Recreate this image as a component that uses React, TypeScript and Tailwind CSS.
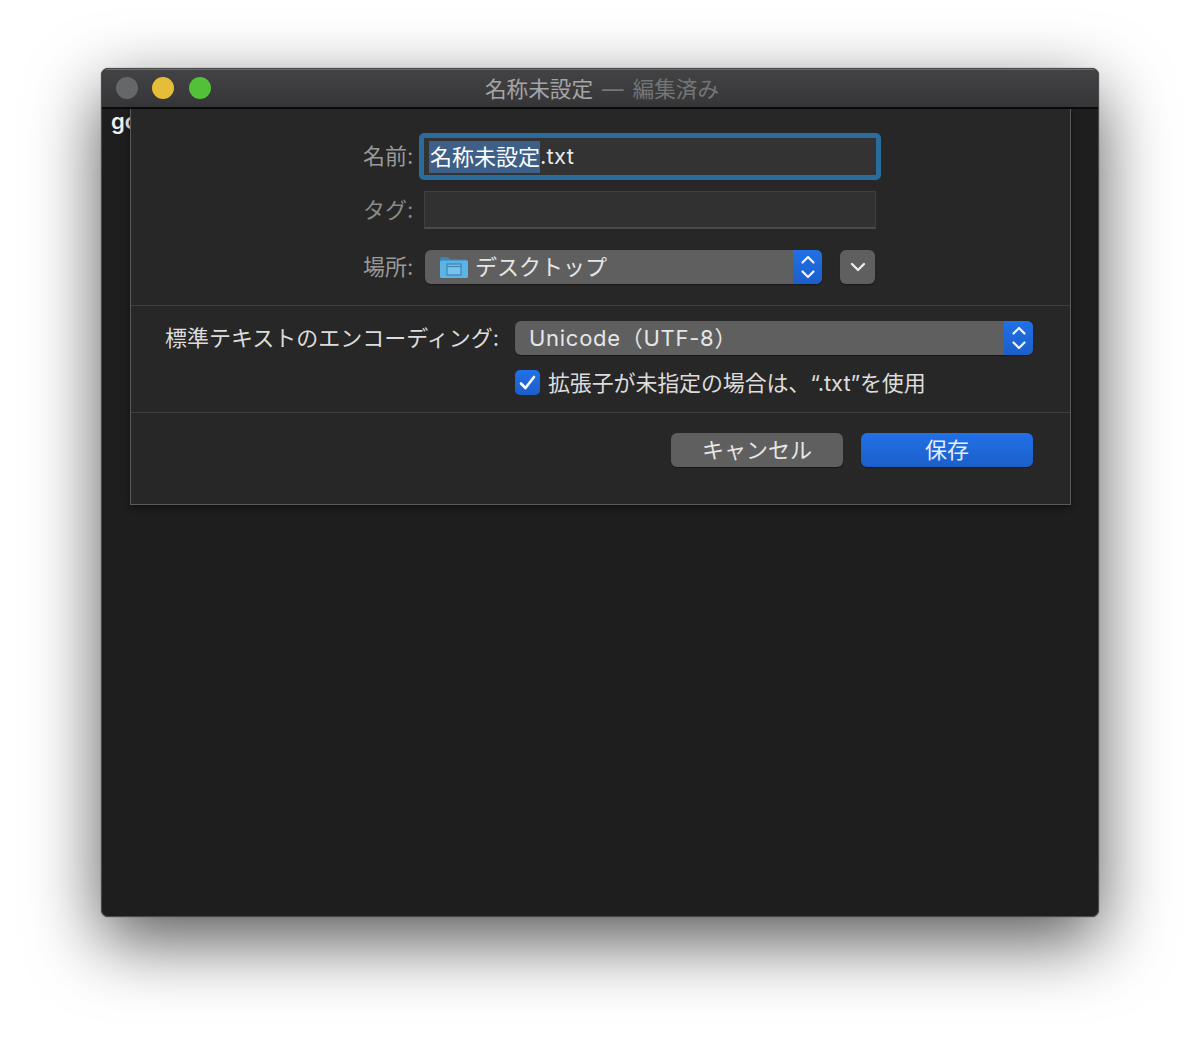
const font = "font-['Inter','Noto_Sans_CJK_JP',sans-serif]";

function Stepper() {
  return (
    <div className="w-[29px] self-stretch rounded-r-[6px] bg-gradient-to-b from-[#2170e8] to-[#1b5fc9] flex items-center justify-center">
      <svg width="16" height="26" viewBox="0 0 16 26" fill="none" stroke="#f0f4fb" strokeWidth="2.2" strokeLinecap="round" strokeLinejoin="round">
        <path d="M2.5 8.5 8 3l5.500 5.500" />
        <path d="M2.500 17.500 8 23l5.500-5.500" />
      </svg>
    </div>
  );
}

function FolderIcon() {
  return (
    <svg width="28" height="22" viewBox="0 0 28 22" className="shrink-0">
      <path d="M0 3a2 2 0 0 1 2-2h6l2.500 2.500H26a2 2 0 0 1 2 2V6H0z" fill="#3d87b4" />
      <rect x="0" y="4.500" width="28" height="17.500" rx="1.500" fill="#5cb3e6" />
      <rect x="7" y="8" width="14" height="11" fill="#7ac2ee" stroke="#3f88b8" strokeWidth="1.300" />
      <path d="M7 10.500h14" stroke="#3f88b8" strokeWidth="1.300" />
    </svg>
  );
}

export default function App() {
  return (
    <div className={`h-[1051px] w-[1200px] overflow-hidden bg-white pl-[101px] pt-[68px] ${font}`}>
      <div className="relative flex h-[849px] w-[998px] flex-col overflow-hidden rounded-[7px] border border-[#4a4a4a] bg-[#1e1e1e] shadow-[0_24px_70px_rgba(0,0,0,0.66),0_0_1px_rgba(0,0,0,0.8)]">
        <div className="relative flex h-[40px] shrink-0 items-center border-b-2 border-[#0b0b0b] bg-gradient-to-b from-[#434345] to-[#363638] pl-[14px] shadow-[inset_0_1px_0_#6b6b6d]">
          <div className="flex gap-[14.300px]">
            <span className="h-[22px] w-[22px] rounded-full bg-[#666769]" />
            <span className="h-[22px] w-[22px] rounded-full bg-[#e6bd39]" />
            <span className="h-[22px] w-[22px] rounded-full bg-[#52c137]" />
          </div>
          <div className="absolute inset-x-0 top-0 flex h-[40px] items-center justify-center pl-[4px] text-[21.6px] text-[#a5a5a6]">
            名称未設定<span className="px-[9px] text-[#747576]">—</span><span className="text-[#747576]">編集済み</span>
          </div>
        </div>
        <div className="relative flex-1">
          <div className="pl-[9px] text-[22px] font-semibold leading-[24px] text-[#f0f0f0]">go</div>
          <div className="absolute left-[28px] top-0 flex h-[396px] w-[941px] flex-col border-x border-b border-[#5a5a5a] bg-[#272727] text-[22px] shadow-[0_2px_6px_rgba(0,0,0,0.5)]">
            <div className="flex h-[197px] flex-col border-b border-[#3e3e3e] pl-[232px]">
              <div className="mt-[24px] flex h-[47px] items-center">
                <span className="w-[50px] whitespace-nowrap text-right text-[#9a9a9a]">名前:</span>
                <div className="ml-[6px] flex h-[47px] w-[462px] items-center rounded-[5px] border-[5px] border-[#2a6c9b] bg-[#333333] pl-[5px] text-[#e8e8e8]">
                  <span className="bg-[#3d5f88] pl-[1px] leading-[32px] text-white">名称未設定</span><span className="tracking-[0.25px]">.txt</span>
                </div>
              </div>
              <div className="mt-[11px] flex h-[38px] items-center">
                <span className="w-[50px] whitespace-nowrap text-right text-[#8a8a8a]">タグ:</span>
                <div className="ml-[11px] h-[38px] w-[452px] border border-b-2 border-[#3f3f3f] border-b-[#4a4a4a] bg-[#313131]" />
              </div>
              <div className="mt-[21px] flex h-[34px] items-center">
                <span className="w-[50px] whitespace-nowrap text-right text-[#9a9a9a]">場所:</span>
                <div className="ml-[12px] flex h-[34px] w-[397px] items-center rounded-[6px] bg-[#5f5f5f] shadow-[0_1px_1px_rgba(0,0,0,0.4)]">
                  <div className="flex flex-1 items-center gap-[7px] pl-[15px] text-[#e6e6e6]">
                    <FolderIcon />
                    デスクトップ
                  </div>
                  <Stepper />
                </div>
                <div className="ml-[18px] flex h-[34px] w-[35px] items-center justify-center rounded-[6px] bg-[#5f5f5f] shadow-[0_1px_1px_rgba(0,0,0,0.4)]">
                  <svg width="16" height="10" viewBox="0 0 16 10" fill="none" stroke="#ececec" strokeWidth="2.400" strokeLinecap="round" strokeLinejoin="round">
                    <path d="M2 2l6 6 6-6" />
                  </svg>
                </div>
              </div>
            </div>
            <div className="flex h-[107px] flex-col border-b border-[#3e3e3e]">
              <div className="mt-[15px] flex h-[34px] items-center pl-[34px]">
                <span className="w-[350px] whitespace-nowrap text-[#dcdcdc]">標準テキストのエンコーディング:</span>
                <div className="flex h-[34px] w-[518px] items-center rounded-[6px] bg-[#5f5f5f] shadow-[0_1px_1px_rgba(0,0,0,0.4)]">
                  <div className="flex-1 whitespace-nowrap pl-[14px] tracking-[0.72px] text-[#e6e6e6]">Unicode（UTF-8）</div>
                  <Stepper />
                </div>
              </div>
              <div className="mt-[15px] flex h-[25px] items-center pl-[384px]">
                <div className="flex h-[25px] w-[25px] items-center justify-center rounded-[5px] bg-gradient-to-b from-[#2170e8] to-[#1b5fc9]">
                  <svg width="17" height="15" viewBox="0 0 17 15" fill="none" stroke="#ffffff" strokeWidth="2.600" strokeLinecap="round" strokeLinejoin="round">
                    <path d="M2 8.500 6.500 13 15 2" />
                  </svg>
                </div>
                <span className="ml-[8px] whitespace-nowrap pt-[1px] tracking-[-0.15px] text-[#dcdcdc]">拡張子が未指定の場合は、“.txt”を使用</span>
              </div>
            </div>
            <div className="flex justify-end gap-[18px] pr-[37px] pt-[20px]">
              <div className="flex h-[34px] w-[172px] items-center justify-center rounded-[6px] bg-[#5f5f5f] text-[#e6e6e6] shadow-[0_1px_1px_rgba(0,0,0,0.4)]">キャンセル</div>
              <div className="flex h-[34px] w-[172px] items-center justify-center rounded-[6px] bg-gradient-to-b from-[#2170e8] to-[#1b5fc9] text-[#e6eefb] shadow-[0_1px_1px_rgba(0,0,0,0.4)]">保存</div>
            </div>
          </div>
        </div>
      </div>
    </div>
  );
}
